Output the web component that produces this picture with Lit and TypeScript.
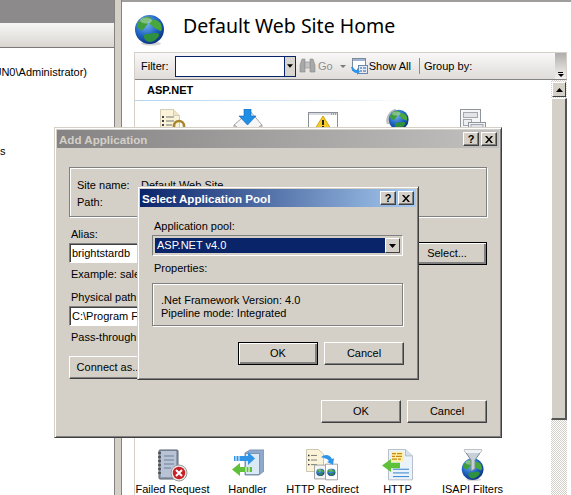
import {LitElement, html, css} from 'lit';
import {customElement} from 'lit/decorators.js';

// --- Icons ---
const globe = (id: string) => html`<svg viewBox="0 0 32 32" width="100%" height="100%">
  <defs><radialGradient id=${id} cx="0.38" cy="0.3" r="0.75">
    <stop offset="0" stop-color="#7fb6f2"/><stop offset="0.55" stop-color="#1f66c4"/><stop offset="1" stop-color="#0b2f7c"/>
  </radialGradient></defs>
  <ellipse cx="17" cy="29.5" rx="10" ry="2" fill="#bbb" opacity="0.6"/>
  <circle cx="15.5" cy="15.5" r="14.5" fill="url(#${id})"/>
  <path d="M6 6c3-3 7-4 10-3 2 1 1 3-1 4-2 2-1 4-3 5-2 2-3 5-5 4-2-1-4-3-4-5 0-2 2-3 3-5z" fill="#3f9e3a"/>
  <path d="M17 6c3-1 8 0 10 4 1 3 1 6 0 7-2 0-3-2-5-2-2-1-3-3-5-4-2-1-2-4 0-5z" fill="#49a83c"/>
  <path d="M10 21c3-2 7-1 10-2 3 0 6 0 5 3-2 3-6 6-9 6-3 0-7-3-6-7z" fill="#2f9140"/>
  <ellipse cx="12" cy="6.5" rx="6" ry="3" fill="#fff" opacity="0.35"/>
</svg>`;

const iconLogging = html`<svg viewBox="0 0 28 34" width="28" height="34">
  <path d="M1.500 .5h13l6 6v26h-19z" fill="#fbf3d8" stroke="#d4cdb6"/>
  <path d="M14.500 .5v6h6" fill="#efe6c8" stroke="#d4cdb6"/>
  <path d="M7 8h8M7 12h8M7 16h6" stroke="#777" stroke-width="1.200"/>
  <path d="M3 8h2M3 12h2M3 16h2" stroke="#444" stroke-width="2"/>
  <path d="M15 24v-7a5 5 0 0 1 10 0v7" fill="none" stroke="#a8862e" stroke-width="2.600"/>
</svg>`;

const iconCompress = html`<svg viewBox="0 0 30 34" width="30" height="34">
  <path d="M1 16 17 2l12 14-14 10z" fill="#f6f6f6" stroke="#a5a5a5"/>
  <path d="M1 16v10l14 7 14-7V16l-14 10z" fill="#e6e6e6" stroke="#a5a5a5"/>
  <path d="M11 0h7v7h5l-8.500 9L6 7h5z" fill="#1f8fe6" stroke="#1565b5" stroke-width=".6"/>
</svg>`;

const iconWarnWindow = html`<svg viewBox="0 0 30 34" width="30" height="34">
  <g transform="translate(0 3)">
    <rect x=".5" y=".5" width="29" height="30" fill="#fff" stroke="#8a8f98"/>
    <rect x="1" y="1" width="28" height="2" fill="#d8dbe0"/>
    <path d="M23 2h1m1 0h1m1 0h1" stroke="#666"/>
    <path d="M15 4 23 17H7z" fill="#f5cc2a" stroke="#d6a510"/>
    <path d="M14 8h2v5h-2zM14 14h2v2h-2z" fill="#222"/>
  </g>
</svg>`;

const iconRefreshGlobe = html`<svg viewBox="0 0 24 34" width="24" height="34">
  <path d="M2 15A11 11 0 0 1 10 1" fill="none" stroke="#bcbcbc" stroke-width="2.400"/>
  <svg x="2" y="0" width="22" height="22">${globe('g3')}</svg>
</svg>`;

const iconPages = html`<svg viewBox="0 0 26 34" width="26" height="34">
  <rect x=".5" y=".5" width="20" height="28" fill="#f6f6f6" stroke="#90949b"/>
  <rect x="3.500" y="3.500" width="14" height="5" fill="#e2e4e8" stroke="#a4a8ae"/>
  <rect x="3.500" y="10.500" width="8" height="6" fill="#eceef1" stroke="#a4a8ae"/>
  <rect x="8.500" y="13.500" width="17" height="18" fill="#eef1f5" stroke="#90949b"/>
  <rect x="11" y="15.500" width="12" height="4" fill="#dfe3e8" stroke="#a4a8ae"/>
</svg>`;

const iconFailed = html`<svg viewBox="0 0 31 34" width="31" height="34">
  <rect x="2" y="1" width="19" height="29" rx="1" fill="#8d99ad" stroke="#59626f"/>
  <rect x="4" y="2" width="15" height="26" fill="#b8c3d6"/>
  <path d="M7 7h10M7 11h10M7 15h10M7 19h7" stroke="#6f7e97"/>
  <path d="M1 4h3M1 8h3M1 12h3M1 16h3M1 20h3M1 24h3" stroke="#444" stroke-width="1.300"/>
  <circle cx="22" cy="24" r="8" fill="#e8e8e8" stroke="#9b9b9b"/>
  <circle cx="22" cy="24" r="6.200" fill="#c81f27"/>
  <path d="m19 21 6 6m0-6-6 6" stroke="#fff" stroke-width="2"/>
</svg>`;

const iconHandler = html`<svg viewBox="0 0 33 34" width="33" height="34">
  <path d="M14 4 19 1h14v21l-5 4H14z" fill="#8ea9cc" stroke="#7e95b2"/>
  <rect x="14.500" y="4.500" width="14" height="21" fill="#dbe8f6" stroke="#7e95b2"/>
  <path d="M3 7h14V3l7 6.500L17 16v-4H3z" fill="#2f95e8"/>
  <path d="M21 18H9v-4l-8 6.500L9 27v-4h12z" fill="#5fc13a"/>
  <path d="M5 7v5M8 7v5M15 18v5M18 18v5" stroke="#fff"/>
</svg>`;

const iconRedirect = html`<svg viewBox="0 0 32 34" width="32" height="34">
  <g transform="scale(1 .92)">
    <path d="M.5 .5h12l5 5v19H.5z" fill="#fbf3d8" stroke="#c9c3ae"/>
    <path d="M5 7h6M5 12h6M5 17h6" stroke="#777"/>
    <path d="M2 7h1.500M2 12h1.500M2 17h1.500" stroke="#333" stroke-width="1.500"/>
    <path d="M8.500 17.500h12v15h-12z" fill="#f4f4f4" stroke="#a0a0a0"/>
    <path d="M19.500 16.500h12v17h-12z" fill="#fff" stroke="#a0a0a0"/>
    <svg x="10" y="21" width="9" height="9">${globe('g5')}</svg>
    <svg x="21" y="21" width="9" height="9">${globe('g6')}</svg>
    <path d="M15 9c4-4 9-3 11 2l2-1-1 7-6-3 2-1c-2-3-5-3-8-4z" fill="#2f95e8"/>
  </g>
</svg>`;

const iconHttp = html`<svg viewBox="0 0 31 34" width="31" height="34">
  <g transform="scale(1 .92)">
    <path d="M6.500 .5h17l7 7v26h-24z" fill="#eaf2fb" stroke="#b4bdc8"/>
    <path d="M23.500 .5v7h7" fill="#d5e0ec" stroke="#b4bdc8"/>
    <rect x="9" y="3" width="13" height="11" fill="#fff0a8"/>
    <path d="M10 5h4m1 0h5M10 8h3m1 0h6M10 11h5m1 0h3" stroke="#c68a10" stroke-width="1.200"/>
    <path d="M11 22h16M11 26h16M11 30h16" stroke="#2d7dc8"/>
    <path d="M18 19H9v-4l-9 7 9 7v-4h9z" fill="#5fc13a" transform="translate(0 -4)"/>
  </g>
</svg>`;

const iconIsapi = html`<svg viewBox="0 0 24 34" width="24" height="34">
  <svg x="0" y="8" width="24" height="25">${globe('g8')}</svg>
  <path d="M3 1h18l-7 10v9l-4 2V11z" fill="#c7d0d8" stroke="#7a8791"/>
  <path d="M3 1h18l-2 3H5z" fill="#eef2f5"/>
</svg>`;

const binoculars = html`<svg viewBox="0 0 17 16" width="17" height="16">
  <path d="M1 7 3 1h3v13H1zM16 7l-2-6h-3v13h5z" fill="#a8a8a8" stroke="#8c8c8c" stroke-width=".6"/>
  <rect x="6" y="4" width="5" height="6" fill="#c4c4c4" stroke="#8c8c8c" stroke-width=".6"/>
</svg>`;

const showAll = html`<svg viewBox="0 0 17 17" width="17" height="17">
  <rect x="1.500" y=".5" width="13" height="12" fill="#fff" stroke="#7f8a99"/>
  <rect x="2" y="1" width="12" height="2" fill="#9fb4cf"/>
  <rect x="7.500" y="7.500" width="9" height="8" fill="#e3ecf8" stroke="#6d86a8"/>
  <path d="M9 10h2m1 0h3M9 13h2m1 0h3" stroke="#335c92"/>
  <path d="M0 9c1 4 3 6 6 6v2l3-3.500L6 10v2c-2 0-3-1-4-3z" fill="#2f95e8"/>
</svg>`;

const arrow = html`<svg viewBox="0 0 7 4" width="7" height="4"><path d="M0 0h7L3.500 4z" fill="#000"/></svg>`;
const upArrow = html`<svg viewBox="0 0 7 4" width="7" height="4"><path d="M0 4h7L3.500 0z" fill="#000"/></svg>`;
const closeGlyph = html`<svg viewBox="0 0 8 7" width="8" height="7"><path d="M0 0h2l2 2.500L6 0h2L5 3.500 8 7H6L4 4.500 2 7H0l3-3.500z" fill="#000"/></svg>`;

const features = [
  {icon: iconFailed, label: 'Failed Request'},
  {icon: iconHandler, label: 'Handler'},
  {icon: iconRedirect, label: 'HTTP Redirect'},
  {icon: iconHttp, label: 'HTTP'},
  {icon: iconIsapi, label: 'ISAPI Filters'},
];

const aspIcons = [iconLogging, iconCompress, iconWarnWindow, iconRefreshGlobe, iconPages];

@customElement('app-root')
export class AppRoot extends LitElement {
  // --- Styling ---
  static styles = css`
    :host {
      display: block;
      position: relative;
      width: 571px;
      height: 495px;
      overflow: hidden;
      background: #fff;
      color: #000;
      font: 11px/13px "Liberation Sans", Arial, sans-serif;
    }
    .shell {
      display: flex;
      height: 495px;
    }

    /* left tree pane */
    .tree {
      width: 114px;
      flex: none;
    }
    .tree-head {
      height: 23px;
      background: #8c8a8a;
    }
    .tree-band {
      height: 24px;
      background: linear-gradient(#f8f6f6, #d9d6d2);
      border-bottom: 1px solid #7b7977;
    }
    .tree-user {
      margin-top: 18px;
      display: flex;
      justify-content: flex-end;
      padding-right: 27px;
      white-space: nowrap;
    }
    .tree-cut {
      margin-top: 66px;
    }
    .splitter {
      width: 6px;
      flex: none;
      background: #d4d0c8;
      border-left: 1px solid #858280;
      border-right: 1px solid #858280;
    }

    /* right pane */
    .main {
      flex: 1;
      display: flex;
      flex-direction: column;
      min-width: 0;
      border-top: 2px solid #a09e9c;
      padding-left: 12px;
    }
    .main-head {
      height: 50px;
      display: flex;
      align-items: center;
      gap: 17px;
      box-sizing: border-box;
      padding-top: 5px;
    }
    .main-globe {
      width: 32px;
      height: 32px;
    }
    h1 {
      margin: 0 0 7px 0;
      font: 400 19.5px/24px "Noto Sans", sans-serif;
      color: #000;
    }
    .pane {
      width: 432px;
      flex: 1;
      display: flex;
      flex-direction: column;
      border-left: 1px solid #d4d0c8;
      min-height: 0;
    }

    .toolbar {
      height: 26px;
      display: flex;
      align-items: center;
      background: linear-gradient(#f9f8f8, #dfdcd9);
      border-top: 1px solid #d4d0c8;
      border-right: 1px solid #d4d0c8;
      border-bottom: 1px solid #858585;
      padding-left: 6px;
    }
    .filter-label {
      width: 34px;
    }
    .filter {
      display: flex;
      width: 121px;
      height: 21px;
      box-sizing: border-box;
      border: 1px solid #0a246a;
      background: #fff;
    }
    .filter-drop {
      margin-left: auto;
      width: 10px;
      background: #d8d5d0;
      border-left: 1px solid #0a246a;
      display: flex;
      align-items: center;
      justify-content: center;
    }
    .filter-drop svg {
      width: 6px;
    }
    .bino {
      margin-left: 3px;
      display: flex;
    }
    .go {
      margin-left: 2px;
      color: #8e8e8e;
    }
    .go-arrow {
      margin-left: 7px;
      border-top: 3px solid #7a7a7a;
      border-left: 3px solid transparent;
      border-right: 3px solid transparent;
    }
    .show-icon {
      margin-left: 5px;
      display: flex;
    }
    .show-text {
      margin-left: 1px;
    }
    .sep {
      width: 1px;
      height: 16px;
      margin: 0 4px 0 8px;
      background: #8a8a8a;
    }
    .chevron {
      margin-left: auto;
      width: 11px;
      height: 100%;
      background: linear-gradient(#b0aeac, #dcdad7 60%, #f2f1f0);
      display: flex;
      flex-direction: column;
      align-items: center;
      justify-content: flex-end;
      padding-bottom: 2px;
      box-sizing: border-box;
    }
    .chevron i {
      display: block;
      width: 5px;
      height: 1px;
      background: #000;
      margin-bottom: 1px;
    }
    .chevron b {
      display: block;
      border-top: 3px solid #000;
      border-left: 3px solid transparent;
      border-right: 3px solid transparent;
    }

    .body {
      flex: 1;
      display: flex;
      min-height: 0;
    }
    .list {
      flex: 1;
      display: flex;
      flex-direction: column;
      min-width: 0;
    }
    .group-head {
      height: 21px;
      padding: 4px 0 0 12px;
      box-sizing: border-box;
      font-weight: 700;
      border-bottom: 1px solid;
      border-image: linear-gradient(90deg, #b3d4f2, #e6f0fa 80%, #fff) 1;
      width: 275px;
    }
    .row {
      display: grid;
      grid-template-columns: repeat(5, 75px);
      justify-items: center;
    }
    .row-top {
      margin-top: 8px;
      flex: 1;
    }
    .feature {
      display: flex;
      flex-direction: column;
      align-items: center;
      white-space: nowrap;
      height: 46px;
    }
    .feature svg {
      display: block;
      flex: none;
    }

    .scroll {
      width: 16px;
      flex: none;
      display: flex;
      flex-direction: column;
      background: repeating-conic-gradient(#d4d0c8 0 25%, #fff 0 50%) 0 0 / 2px 2px;
    }
    .scroll-btn {
      height: 13px;
      margin: 2px 1px 1px 1px;
      background: #d4d0c8;
      border-top: 1px solid #fff;
      border-left: 1px solid #fff;
      border-bottom: 1px solid #404040;
      border-right: 1px solid #404040;
      display: flex;
      align-items: center;
      justify-content: center;
    }
    .scroll-thumb {
      height: 319px;
      background: #d4d0c8;
      border-top: 1px solid #fff;
      border-left: 1px solid #fff;
      border-bottom: 2px solid #555;
      border-right: 2px solid #555;
    }

    /* dialogs */
    .dialog {
      position: absolute;
      box-sizing: border-box;
      background: #d4d0c8;
      border: 1px solid;
      border-color: #d4d0c8 #404040 #404040 #d4d0c8;
      box-shadow: inset 1px 1px 0 #fff, inset -1px -1px 0 #808080;
      padding: 2px;
    }
    .outer {
      left: 54px;
      top: 127px;
      width: 448px;
      height: 311px;
    }
    .inner {
      left: 137px;
      top: 186px;
      width: 282px;
      height: 194px;
    }
    .title {
      height: 18px;
      display: flex;
      align-items: center;
      padding: 0 2px;
      font-weight: 700;
      font-size: 11.6px;
    }
    .outer .title {
      background: linear-gradient(90deg, #858383, #c2c0bf);
      color: #d4d0c8;
    }
    .inner .title {
      background: linear-gradient(90deg, #0a246a, #a6caf0);
      color: #fff;
    }
    .title-btns {
      margin-left: auto;
      display: flex;
      gap: 2px;
    }
    .cap {
      width: 16px;
      height: 14px;
      box-sizing: border-box;
      background: #d4d0c8;
      border: 1px solid;
      border-color: #fff #404040 #404040 #fff;
      box-shadow: inset -1px -1px 0 #808080;
      display: flex;
      align-items: center;
      justify-content: center;
      font: 700 11px/12px "Liberation Sans", sans-serif;
      color: #000;
    }
    .content {
      padding: 19px 12px 0 12px;
    }
    .groupbox {
      box-sizing: border-box;
      border: 1px solid #808080;
      box-shadow: 1px 1px 0 #fff, inset 1px 1px 0 #fff;
    }
    .site {
      height: 50px;
      display: grid;
      grid-template-columns: 64px auto;
      align-content: start;
      grid-auto-rows: 13px;
      row-gap: 4px;
      padding: 11px 0 0 7px;
    }
    .form {
      display: flex;
      justify-content: space-between;
      margin-top: 11px;
    }
    .form-left {
      width: 200px;
      display: flex;
      flex-direction: column;
      align-items: flex-start;
    }
    .lbl {
      margin-left: 2px;
    }
    .field {
      box-sizing: border-box;
      width: 100%;
      height: 20px;
      margin-top: 2px;
      background: #fff;
      border: 1px solid;
      border-color: #808080 #fff #fff #808080;
      box-shadow: inset 1px 1px 0 #404040;
      padding: 3px 0 0 2px;
      white-space: nowrap;
      overflow: hidden;
    }
    .hint {
      margin: 5px 0 0 2px;
      white-space: nowrap;
    }
    .hint.path {
      margin-top: 10px;
    }
    .btn {
      box-sizing: border-box;
      width: 80px;
      height: 23px;
      background: #d4d0c8;
      border: 1px solid;
      border-color: #fff #404040 #404040 #fff;
      box-shadow: inset -1px -1px 0 #808080;
      display: flex;
      align-items: center;
      justify-content: center;
      white-space: nowrap;
    }
    .btn.default {
      border: 1px solid #000;
      box-shadow: inset 1px 1px 0 #fff, inset -2px -2px 0 #808080;
    }
    .connect {
      margin-top: 12px;
    }
    .select-btn {
      margin-top: 14px;
    }
    .actions {
      display: flex;
      justify-content: flex-end;
      gap: 6px;
    }
    .outer .actions {
      margin-top: 21px;
    }
    .inner .content {
      padding: 13px 12px 0 12px;
    }
    .combo {
      box-sizing: border-box;
      width: 251px;
      height: 21px;
      margin-top: 2px;
      display: flex;
      padding: 2px;
      background: #d4d0c8;
      border: 1px solid;
      border-color: #808080 #fff #fff #808080;
    }
    .combo-val {
      flex: 1;
      background: #0a246a;
      color: #fff;
      padding: 1px 0 0 2px;
    }
    .combo-btn {
      width: 15px;
      background: #d4d0c8;
      box-sizing: border-box;
      border: 1px solid;
      border-color: #fff #404040 #404040 #fff;
      display: flex;
      align-items: center;
      justify-content: center;
    }
    .props-label {
      margin: 6px 0 8px 2px;
    }
    .props {
      height: 43px;
      padding: 10px 0 0 8px;
      width: 251px;
    }
    .inner .actions {
      margin-top: 16px;
    }
  `;

  // --- Render ---
  private caption(title: string) {
    return html`<div class="title">
      <span>${title}</span>
      <div class="title-btns">
        <div class="cap">?</div>
        <div class="cap">${closeGlyph}</div>
      </div>
    </div>`;
  }

  render() {
    return html`
      <div class="shell">
        <div class="tree">
          <div class="tree-head"></div>
          <div class="tree-band"></div>
          <div class="tree-user">JN0\\Administrator)</div>
          <div class="tree-cut">s</div>
        </div>
        <div class="splitter"></div>
        <div class="main">
          <div class="main-head">
            <div class="main-globe">${globe('g0')}</div>
            <h1>Default Web Site Home</h1>
          </div>
          <div class="pane">
            <div class="toolbar">
              <span class="filter-label">Filter:</span>
              <div class="filter"><div class="filter-drop">${arrow}</div></div>
              <span class="bino">${binoculars}</span>
              <span class="go">Go</span>
              <span class="go-arrow"></span>
              <span class="show-icon">${showAll}</span>
              <span class="show-text">Show All</span>
              <span class="sep"></span>
              <span>Group by:</span>
              <div class="chevron"><i></i><b></b></div>
            </div>
            <div class="body">
              <div class="list">
                <div class="group-head">ASP.NET</div>
                <div class="row row-top">
                  ${aspIcons.map(i => html`<div>${i}</div>`)}
                </div>
                <div class="row">
                  ${features.map(f => html`<div class="feature">${f.icon}<span>${f.label}</span></div>`)}
                </div>
              </div>
              <div class="scroll">
                <div class="scroll-btn">${upArrow}</div>
                <div class="scroll-thumb"></div>
              </div>
            </div>
          </div>
        </div>
      </div>

      <div class="dialog outer">
        ${this.caption('Add Application')}
        <div class="content">
          <div class="groupbox site">
            <span>Site name:</span><span>Default Web Site</span>
            <span>Path:</span>
          </div>
          <div class="form">
            <div class="form-left">
              <span class="lbl">Alias:</span>
              <div class="field">brightstardb</div>
              <span class="hint">Example: sales</span>
              <span class="hint path">Physical path:</span>
              <div class="field">C:\\Program Files</div>
              <span class="hint">Pass-through authentication</span>
              <div class="btn connect">Connect as...</div>
            </div>
            <div class="btn default select-btn">Select...</div>
          </div>
          <div class="actions">
            <div class="btn">OK</div>
            <div class="btn">Cancel</div>
          </div>
        </div>
      </div>

      <div class="dialog inner">
        ${this.caption('Select Application Pool')}
        <div class="content">
          <div class="lbl">Application pool:</div>
          <div class="combo">
            <div class="combo-val">ASP.NET v4.0</div>
            <div class="combo-btn">${arrow}</div>
          </div>
          <div class="props-label">Properties:</div>
          <div class="groupbox props">
            <div>.Net Framework Version: 4.0</div>
            <div>Pipeline mode: Integrated</div>
          </div>
          <div class="actions">
            <div class="btn default">OK</div>
            <div class="btn">Cancel</div>
          </div>
        </div>
      </div>
    `;
  }
}
